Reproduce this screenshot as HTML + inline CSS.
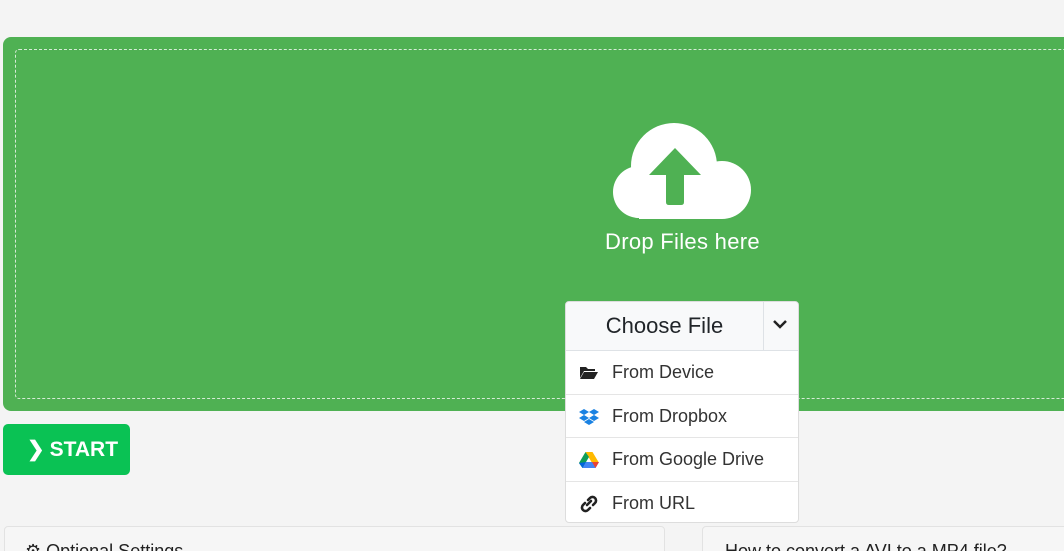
<!DOCTYPE html>
<html style="height:551px;overflow:hidden"><head><style>
body{margin:0;width:1064px;height:551px;background:#f4f4f4;font-family:"Liberation Sans",sans-serif;overflow:hidden;position:relative}
.drop{position:absolute;left:3px;top:37px;width:1080px;height:374px;background:#4fb153;border-radius:8px}
.dash{position:absolute;left:12px;top:12px;right:0;height:348px;border:1px dashed #d6ecd7;border-radius:4px}
.txt{position:absolute;left:605px;top:229px;color:#fff;font-size:22px;letter-spacing:0.3px}
.dd{position:absolute;left:565px;top:301px;width:234px;height:222px;background:#fff;border:1px solid #ddd;border-radius:4px;box-sizing:border-box;overflow:hidden}
.hd{height:48px;background:#f8f9fa;border-bottom:1px solid #dee2e6;position:relative}
.hd .l{position:absolute;left:0;top:0;width:197px;height:48px;line-height:48px;text-align:center;font-size:22px;color:#212529;border-right:1px solid #dee2e6}
.it{height:43.5px;border-bottom:1px solid #e5e5e5;position:relative;font-size:18px;color:#333;line-height:43px;padding-left:46px;box-sizing:border-box}
.it:last-child{border-bottom:none}
.it svg{position:absolute;left:13px;top:13px}
.start{position:absolute;left:3px;top:424px;width:127px;height:51px;background:#0ac254;border-radius:5px;color:#fff;font-weight:bold;font-size:21px;line-height:51px}
.p1{position:absolute;left:4px;top:526px;width:659px;height:40px;background:#f6f6f6;border:1px solid #e2e2e2;border-radius:4px}
.p2{position:absolute;left:702px;top:526px;width:400px;height:40px;background:#f6f6f6;border:1px solid #e2e2e2;border-radius:4px}
.p1 span,.p2 span{position:absolute;top:14px;font-size:18px;color:#222}
</style></head><body>
<div class="drop"><div class="dash"></div></div>
<svg style="position:absolute;left:0;top:0" width="1064" height="300">
<g fill="#fff"><circle cx="639" cy="192" r="26"/><circle cx="674" cy="166" r="43"/><circle cx="722" cy="190" r="29"/><rect x="639" y="175" width="83" height="44"/></g>
<path fill="#4fb153" d="M675 148 L701 175 L684 175 L684 202 Q684 205 681 205 L669 205 Q666 205 666 202 L666 175 L649 175 Z"/>
</svg>
<div class="txt">Drop Files here</div>
<div class="dd">
<div class="hd"><div class="l">Choose File</div>
<svg style="position:absolute;left:206px;top:16px" width="16" height="14" viewBox="0 0 16 14"><path d="M2 3 L8 9 L14 3" fill="none" stroke="#222" stroke-width="2.5"/></svg></div>
<div class="it"><svg width="20" height="16" viewBox="0 0 20 16"><path d="M1 3 h6 l2 2 h7 v2 H5 L1 14 Z M5 8 h14 l-4 7 H1 Z" fill="#222"/></svg>From Device</div>
<div class="it"><svg width="20" height="18" viewBox="0 0 20 18"><g fill="#1a82e2"><path d="M5 1 L10 4 5 7 0 4Z M15 1 L20 4 15 7 10 4Z M5 7 L10 10 5 13 0 10Z M15 7 L20 10 15 13 10 10Z M5 14 L10 11 15 14 10 17Z"/></g></svg>From Dropbox</div>
<div class="it"><svg width="20" height="18" viewBox="0 0 20 18"><path d="M6.5 1 h7 l6 10 h-7Z" fill="#ffba00"/><path d="M6.5 1 L0 12 l3.5 5 L10 6Z" fill="#0f9d58"/><path d="M3.5 17 h13 l3.5 -6 H7Z" fill="#4285f4"/><path d="M0 12 l3.5 5 3.5-6Z" fill="#0066da"/><path d="M13 11h7l-3.5 6z" fill="#ea4335"/></svg>From Google Drive</div>
<div class="it"><svg width="20" height="18" viewBox="0 0 20 18"><g fill="none" stroke="#222" stroke-width="2.6" stroke-linecap="round"><path d="M8 10 L12 6"/><path d="M9 5 l2-2 a3.5 3.5 0 0 1 5 5 l-2 2"/><path d="M11 13 l-2 2 a3.5 3.5 0 0 1 -5 -5 l2 -2"/></g></svg>From URL</div>
</div>
<div class="start"><span style="margin-left:24px;margin-right:5px">&#x276F;</span>START</div>
<div class="p1"><span style="left:20px">&#x2699; Optional Settings</span></div>
<div class="p2"><span style="left:22px">How to convert a AVI to a MP4 file?</span></div>
</body></html>
